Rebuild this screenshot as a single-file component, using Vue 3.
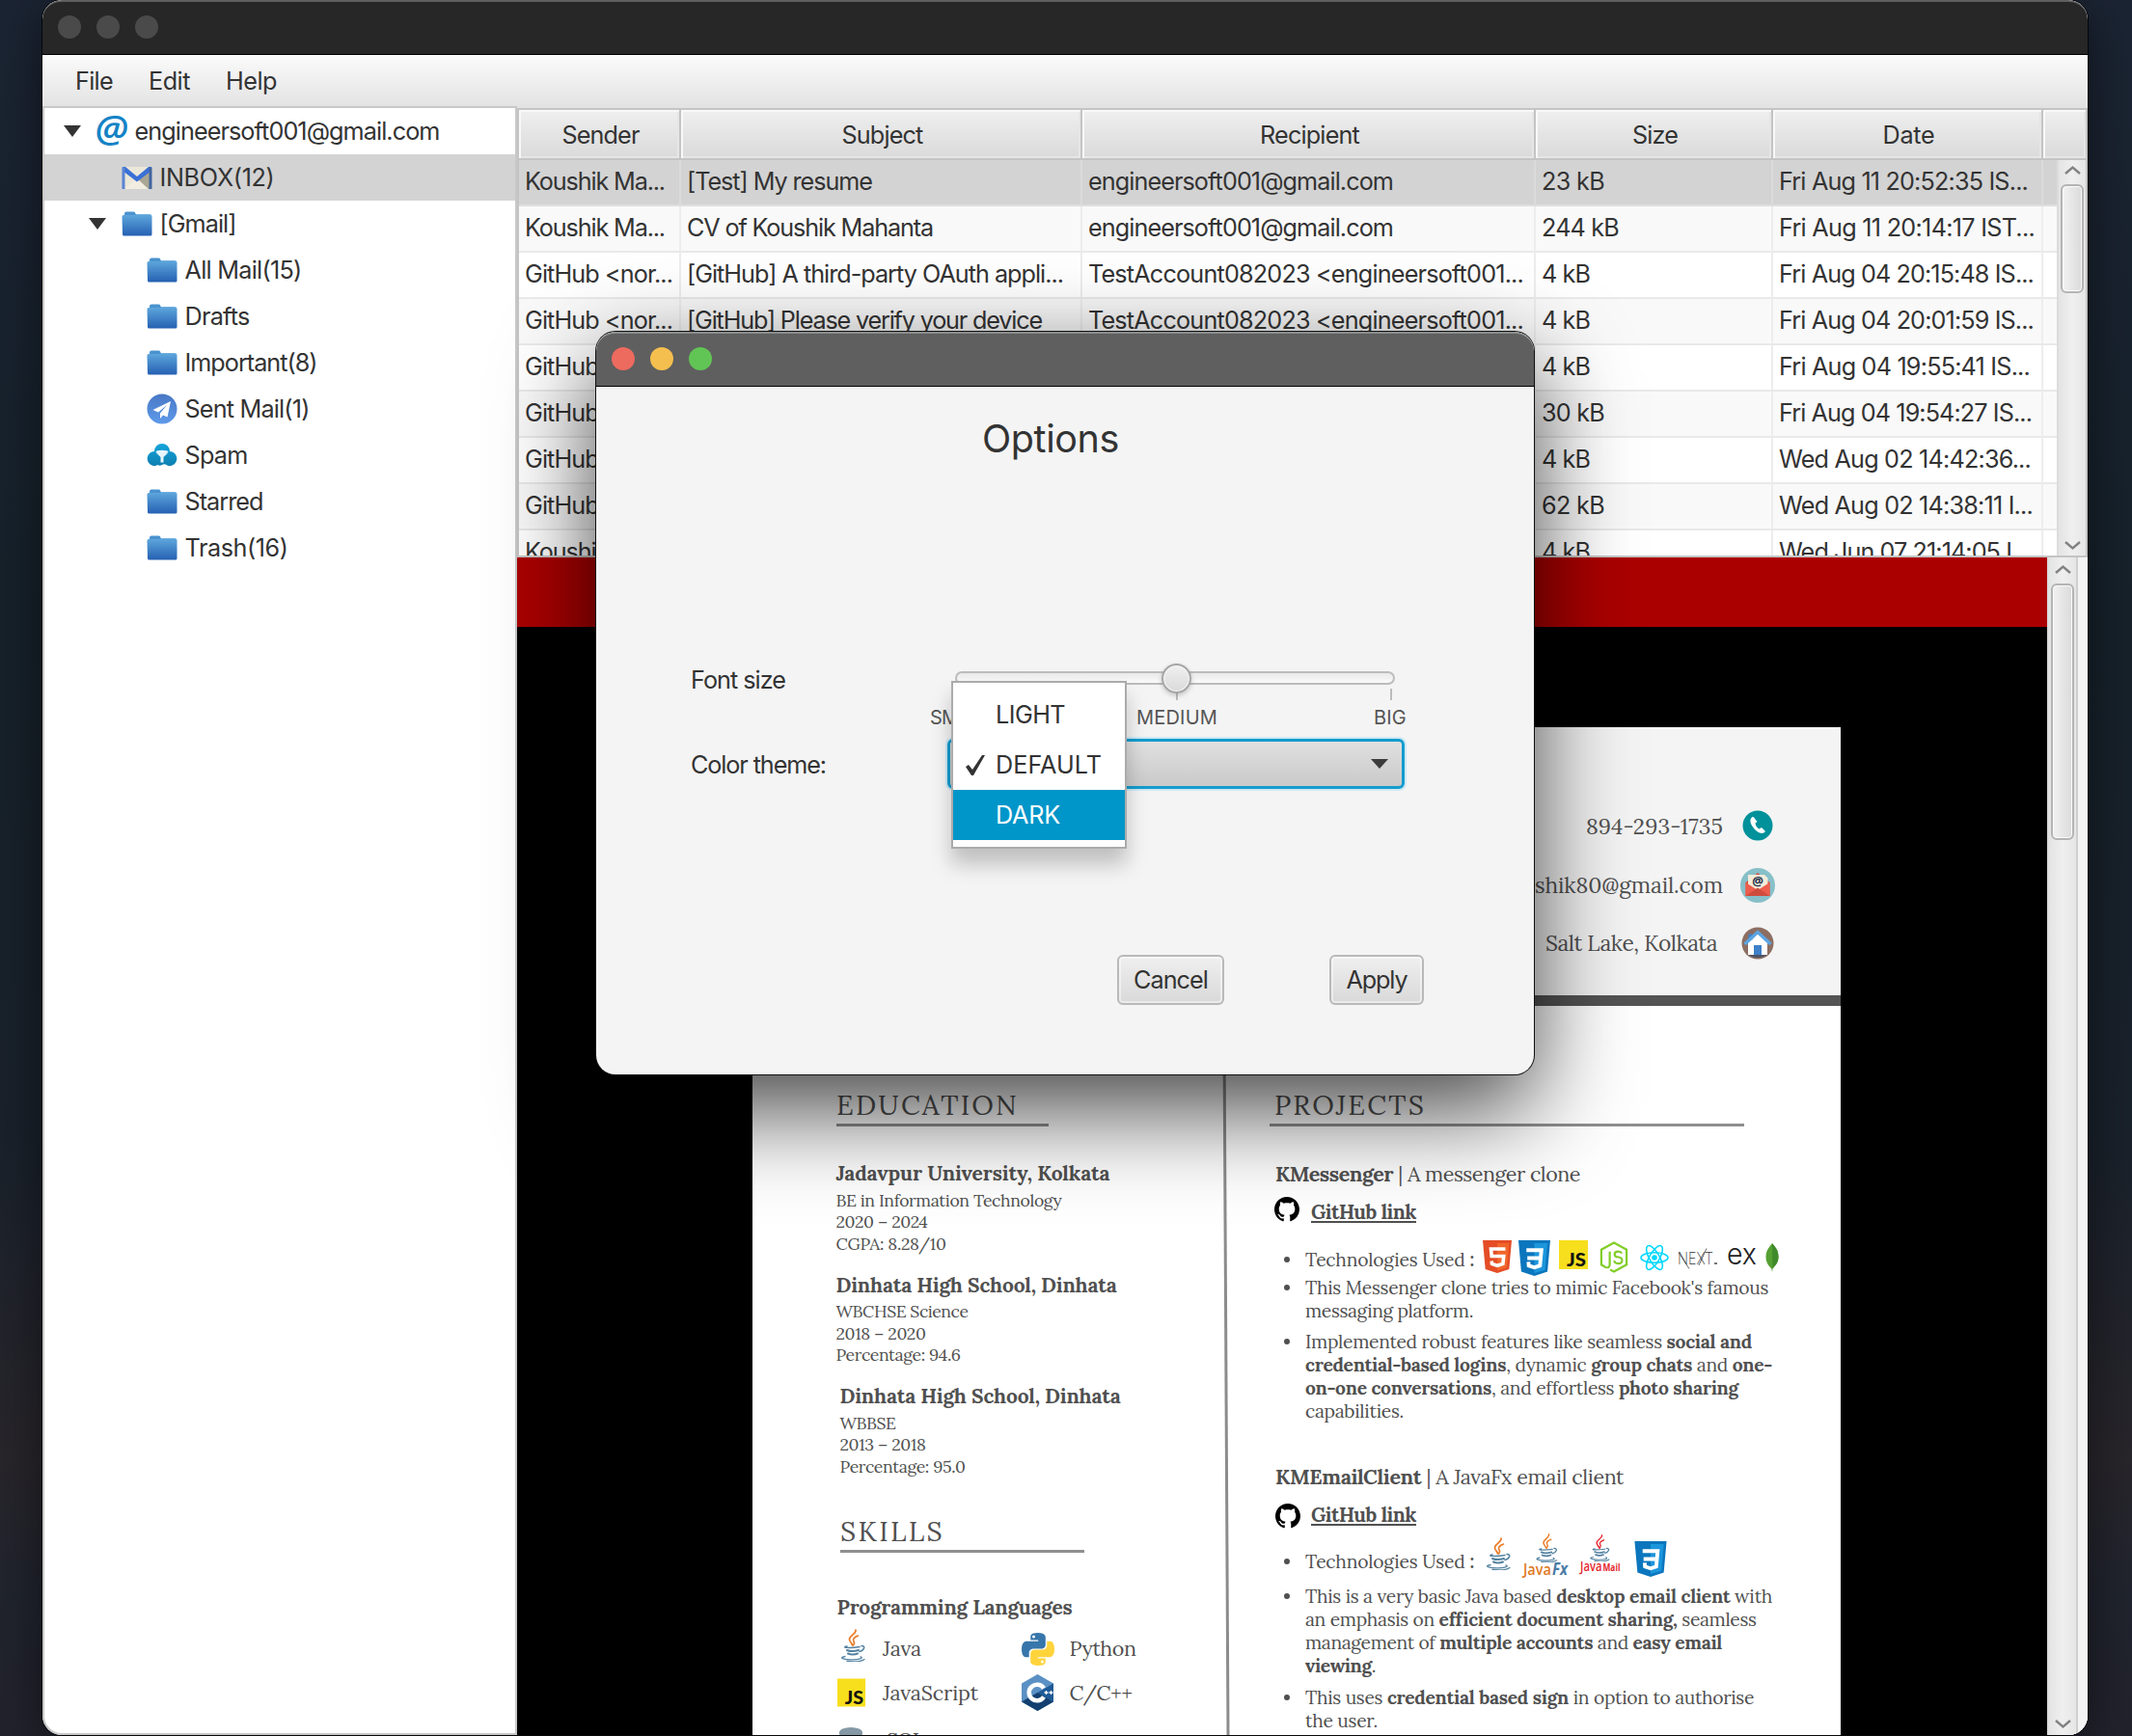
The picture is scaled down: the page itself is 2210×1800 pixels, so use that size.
<script setup>
const menus = [
  { t: 'File', w: 39 },
  { t: 'Edit', w: 43 },
  { t: 'Help', w: 53 },
]

const tree = [
  { t: 'engineersoft001@gmail.com', w: 316, level: 0, icon: 'at', open: true },
  { t: 'INBOX(12)', w: 119, level: 1, icon: 'inbox', selected: true },
  { t: '[Gmail]', w: 79, level: 1, icon: 'folder', open: true },
  { t: 'All Mail(15)', w: 121, level: 2, icon: 'folder' },
  { t: 'Drafts', w: 67, level: 2, icon: 'folder' },
  { t: 'Important(8)', w: 137, level: 2, icon: 'folder' },
  { t: 'Sent Mail(1)', w: 129, level: 2, icon: 'sent' },
  { t: 'Spam', w: 65, level: 2, icon: 'spam' },
  { t: 'Starred', w: 81, level: 2, icon: 'folder' },
  { t: 'Trash(16)', w: 107, level: 2, icon: 'folder' },
]

const columns = [
  { t: 'Sender', w: 80 },
  { t: 'Subject', w: 84 },
  { t: 'Recipient', w: 103 },
  { t: 'Size', w: 47 },
  { t: 'Date', w: 54 },
]

const me = ['Koushik Ma...', 145]
const gh = ['GitHub <nor...', 153]
const own = ['engineersoft001@gmail.com', 316]
const acc = ['TestAccount082023 <engineersoft001...', 451]
const gitSubject = ['[GitHub] Please verify your device', 368]
const mails = [
  [me, ['[Test] My resume', 192], own, ['23 kB', 65], ['Fri Aug 11 20:52:35 IS...', 258]],
  [me, ['CV of Koushik Mahanta', 255], own, ['244 kB', 80], ['Fri Aug 11 20:14:17 IST...', 265]],
  [gh, ['[GitHub] A third-party OAuth appli...', 390], acc, ['4 kB', 50], ['Fri Aug 04 20:15:48 IS...', 264]],
  [gh, gitSubject, acc, ['4 kB', 50], ['Fri Aug 04 20:01:59 IS...', 264]],
  [gh, gitSubject, acc, ['4 kB', 50], ['Fri Aug 04 19:55:41 IS...', 260]],
  [gh, gitSubject, acc, ['30 kB', 65], ['Fri Aug 04 19:54:27 IS...', 262]],
  [gh, gitSubject, acc, ['4 kB', 50], ['Wed Aug 02 14:42:36...', 261]],
  [gh, gitSubject, acc, ['62 kB', 65], ['Wed Aug 02 14:38:11 I...', 263]],
  [me, gitSubject, acc, ['4 kB', 50], ['Wed Jun 07 21:14:05 I...', 260]],
]

const schools = [
  { name: 'Jadavpur University, Kolkata', w: 284, lines: [['BE in Information Technology', 234], ['2020 – 2024', 95], ['CGPA: 8.28/10', 114]] },
  { name: 'Dinhata High School, Dinhata', w: 291, lines: [['WBCHSE Science', 137], ['2018 – 2020', 93], ['Percentage: 94.6', 129]] },
  { name: 'Dinhata High School, Dinhata', w: 291, shifted: true, lines: [['WBBSE', 58], ['2013 – 2018', 89], ['Percentage: 95.0', 130]] },
]

const chat = [
  [['This Messenger clone tries to mimic Facebook\'s famous', 480], ['messaging platform.', 174]],
  [
    ['Implemented robust features like seamless <b>social and</b>', 463],
    ['<b>credential-based logins</b>, dynamic <b>group chats</b> and <b>one-</b>', 484],
    ['<b>on-one conversations</b>, and effortless <b>photo sharing</b>', 449],
    ['capabilities.', 102],
  ],
]
const email = [
  [
    ['This is a very basic Java based <b>desktop email client</b> with', 484],
    ['an emphasis on <b>efficient document sharing,</b> seamless', 466],
    ['management of <b>multiple accounts</b> and <b>easy email</b>', 432],
    ['<b>viewing</b>.', 73],
  ],
  [['This uses <b>credential based sign</b> in option to authorise', 465], ['the user.', 75]],
]

// Tracks a run of text so that it fills the given advance width.
const vFit = {
  mounted(el, { value }) {
    el.style.letterSpacing = '0px'
    const natural = el.getBoundingClientRect().width
    el.style.letterSpacing = (value - natural) / el.textContent.length + 'px'
  },
}
</script>

<template>
  <div class="desktop">
    <svg width="0" height="0" class="defs">
      <defs>
        <linearGradient id="gFolder" x1="0" y1="0" x2="0" y2="1"><stop offset="0" stop-color="#5fa8dd" /><stop offset="1" stop-color="#2560b2" /></linearGradient>
        <linearGradient id="gSent" x1="0" y1="0" x2="0" y2="1"><stop offset="0" stop-color="#4878c4" /><stop offset="1" stop-color="#5f9aea" /></linearGradient>
        <linearGradient id="gSpam" x1="0" y1="0" x2="0" y2="1"><stop offset="0" stop-color="#12a5dc" /><stop offset="1" stop-color="#0e7fb0" /></linearGradient>
        <symbol id="at" viewBox="0 0 32 32">
          <text x="15.500" y="27" text-anchor="middle" font-family="Open Sans, sans-serif" font-weight="600" font-style="italic" font-size="37" textLength="34" lengthAdjust="spacingAndGlyphs" fill="#1583c6">@</text>
        </symbol>
        <symbol id="inbox" viewBox="0 0 32 32">
          <path d="M1 5h30v23H1z" fill="#ebe7d8" />
          <path d="M30 6v22h-4L16 18z" fill="#aaa693" />
          <path d="M3 28l13-11 12 11z" fill="#f1ede0" />
          <path d="M1 5h3l12 10L28 5h3v4L16 20.500 1 9z" fill="#3a70d6" />
          <path d="M.5 5.500h3V28h-3z" fill="#5a84d4" />
          <path d="M28.500 5.500h3V28h-3z" fill="#41659f" />
        </symbol>
        <symbol id="folder" viewBox="0 0 32 32">
          <path d="M3 5.500q0-2 2-2h7.500q1.700 0 2 2l.5 1h13.500q2 0 2 2v3H3z" fill="#4a93cf" />
          <path d="M.5 8.500q0-1.500 1.500-1.500h12l2-.7h13.500q2 0 2 2V27q0 1.500-1.500 1.500H2.500Q1 28.500 1 27z" fill="url(#gFolder)" />
        </symbol>
        <symbol id="sent" viewBox="0 0 32 32">
          <circle cx="16" cy="16" r="15.500" fill="url(#gSent)" />
          <path d="M25 8L6.500 17l5.500 2.400L21 12l-7 8.500V26l3-3.600 4.500 2z" fill="#fff" />
        </symbol>
        <symbol id="spam" viewBox="0 0 32 32">
          <path d="M8 12a8 8 0 0 1 16 0a7.500 7.500 0 0 1 2.500 14.500q-4 1.500-6-.5q-2-1.500-4.500 0t-4.500 0q-3 2-6 .5A7.500 7.500 0 0 1 8 12z" fill="url(#gSpam)" />
          <ellipse cx="16" cy="12.500" rx="6.500" ry="1.800" fill="#e6f5fb" />
          <path d="M9.800 13.500h12.400l-4.700 4.500v5.500h-3V18z" fill="#e6f5fb" />
        </symbol>
        <symbol id="github" viewBox="0 0 16 16">
          <path d="M8 0C3.580 0 0 3.580 0 8c0 3.540 2.290 6.530 5.470 7.590.4.070.55-.17.55-.38 0-.19-.010-.82-.010-1.490-2.010.37-2.530-.49-2.690-.94-.09-.23-.48-.94-.82-1.130-.28-.15-.68-.52-.010-.53.63-.010 1.080.58 1.230.82.72 1.210 1.870.87 2.330.66.070-.52.28-.87.51-1.070-1.780-.2-3.640-.89-3.640-3.950 0-.87.31-1.590.82-2.150-.08-.2-.36-1.020.08-2.120 0 0 .67-.21 2.200.82.64-.18 1.320-.27 2-.27s1.360.09 2 .27c1.530-1.040 2.200-.82 2.200-.82.44 1.100.16 1.920.08 2.120.51.56.82 1.270.82 2.150 0 3.070-1.870 3.750-3.650 3.950.29.25.54.73.54 1.480 0 1.070-.010 1.930-.010 2.200 0 .21.15.46.55.38A8.010 8.010 0 0 0 16 8c0-4.420-3.580-8-8-8z" fill="#000" />
        </symbol>
        <symbol id="html5" viewBox="0 0 30 34">
          <path d="M0 0h30l-2.700 30L15 34 2.700 30z" fill="#e44d26" />
          <path d="M15 3h12.300L25 28.500 15 31.500z" fill="#f16529" />
          <path d="M23.500 9H8.500l.7 7.500h12.500l-.8 8-5.900 1.800L9.500 24.500l-.3-3" fill="none" stroke="#fff" stroke-width="3.600" />
        </symbol>
        <symbol id="css3" viewBox="0 0 34 38">
          <path d="M0 0h34l-3 33.500L17 38 3 33.500z" fill="#0b76bd" />
          <path d="M17 3h14l-2.600 28.500L17 35z" fill="#1c96dc" />
          <path d="M8.500 10.500h16l-1.500 16.500-6 2-6-2-.3-4M9.500 19h14" fill="none" stroke="#fff" stroke-width="4" />
        </symbol>
        <symbol id="js" viewBox="0 0 30 30">
          <path d="M0 0h30v30H0z" fill="#f7df1e" />
          <text x="8" y="27" font-family="Lato, sans-serif" font-weight="900" font-size="19.500" textLength="20" lengthAdjust="spacingAndGlyphs" fill="#111">JS</text>
        </symbol>
        <symbol id="node" viewBox="0 0 30 34">
          <path d="M11 30.500l4 2L28.500 25V9L15 1.500 1.500 9v16l4.500 2.800q4.500 1.200 4.500-3V11" fill="none" stroke="#83cd29" stroke-width="2.300" />
          <path d="M23.500 13q-1-2-4-2-3.800 0-3.800 2.800t4 3.200 4 3.500-4 3.300-4.500-3" fill="none" stroke="#83cd29" stroke-width="2.200" />
        </symbol>
        <symbol id="react" viewBox="0 0 30 28">
          <g fill="none" stroke="#00d8ff" stroke-width="1.600">
            <ellipse cx="15" cy="14" rx="14" ry="5.200" />
            <ellipse cx="15" cy="14" rx="14" ry="5.200" transform="rotate(60 15 14)" />
            <ellipse cx="15" cy="14" rx="14" ry="5.200" transform="rotate(120 15 14)" />
          </g>
          <circle cx="15" cy="14" r="2.800" fill="#00d8ff" />
        </symbol>
        <symbol id="leaf" viewBox="0 0 14 30">
          <path d="M7 0c2 3 6.500 6 6.500 14 0 7-4 9.500-6 12.500L7 30l-.7-3.500C4 24 .5 21 .5 14 .5 7 5 3 7 0z" fill="#56a033" />
          <path d="M7 0c2 3 6.500 6 6.500 14 0 7-4 9.500-6 12.500z" fill="#3f8b2b" />
        </symbol>
        <symbol id="java" viewBox="0 0 26 34">
          <g fill="none" stroke-linecap="round">
            <path d="M16 1c1 4-7 6-6.500 10 .2 2.500 2.800 3.500 3 6" stroke-width="1.700" />
            <path d="M18.500 7c-4 1.500-6 3.500-4.500 6 1 1.500.5 2.800-.5 4" stroke-width="1.600" />
          </g>
          <g fill="none" stroke="#5382a1" stroke-linecap="round">
            <path d="M7 18c-7 1.500 4 2 13 .5M22 17.500c5 0 2.500 5-2 6" stroke-width="1.500" />
            <path d="M7 22c3 1.300 8 1.300 12 0M8 25.500c3 1.300 6.500 1.300 10 0" stroke-width="2" />
            <path d="M5 28.500C-3 30 5 32 13 31.800c6 0 12-1.500 8-3M7 33.500c7 .8 15 0 18-2" stroke-width="1.300" />
          </g>
        </symbol>
        <symbol id="python" viewBox="0 0 34 34">
          <path d="M16.800 0C9 0 9.300 3.500 9.300 3.500V7.500h7.900v1.200H5.500S0 8 0 17s4.700 8.300 4.700 8.300h3v-4s-.2-4.700 4.700-4.700h7.900s4.500 0 4.500-4.400V4.800S25.500 0 16.800 0zM12.500 2.500a1.500 1.500 0 1 1 0 3 1.500 1.500 0 0 1 0-3z" fill="#3776ab" />
          <path transform="rotate(180 17 17)" d="M16.800 0C9 0 9.300 3.500 9.300 3.500V7.500h7.900v1.200H5.500S0 8 0 17s4.700 8.300 4.700 8.300h3v-4s-.2-4.700 4.700-4.700h7.900s4.500 0 4.500-4.400V4.800S25.500 0 16.800 0zM12.500 2.500a1.500 1.500 0 1 1 0 3 1.500 1.500 0 0 1 0-3z" fill="#ffd43b" />
        </symbol>
        <symbol id="cpp" viewBox="0 0 33 38">
          <path d="M16.500 0L33 9.500v19L16.500 38 0 28.500v-19z" fill="#5b90c4" />
          <path d="M33 9.500v19L16.500 19z" fill="#1f5a96" />
          <path d="M0 28.500L16.500 19 33 28.500 16.500 38z" fill="#123f70" />
          <path d="M23 14.500a8.300 8.300 0 1 0 0 9" fill="none" stroke="#fff" stroke-width="4.600" />
          <path d="M23.500 19h4M25.500 17v4M28.500 19h4M30.500 17v4" stroke="#fff" stroke-width="1.400" />
        </symbol>
        <symbol id="database" viewBox="0 0 24 34">
          <path d="M0 5v25h24V5z" fill="#a3b4bf" />
          <ellipse cx="12" cy="5.500" rx="12" ry="5.500" fill="#8499a5" />
          <path d="M12 11h12v20H12z" fill="#93a6b1" />
        </symbol>
      </defs>
    </svg>

    <div class="app">
      <div class="titlebar"><i /><i /><i /></div>
      <div class="menubar">
        <div v-for="m in menus" :key="m.t" class="menu"><span v-fit="m.w">{{ m.t }}</span></div>
      </div>
      <div class="body">
        <div class="tree">
          <div v-for="n in tree" :key="n.t" class="node" :class="['l' + n.level, { selected: n.selected }]">
            <svg class="twisty" viewBox="0 0 18 12"><path v-if="n.open" d="M0 0h18l-9 12z" fill="#333" /></svg>
            <svg class="nodeicon"><use :href="'#' + n.icon" /></svg>
            <span v-fit="n.w">{{ n.t }}</span>
          </div>
        </div>

        <div class="main">
          <div class="table">
            <div class="thead">
              <div v-for="c in columns" :key="c.t" class="th"><span v-fit="c.w">{{ c.t }}</span></div>
              <div class="th" />
            </div>
            <div class="tbody">
              <div class="rows">
                <div v-for="(m, i) in mails" :key="i" class="tr" :class="{ selected: i === 0 }">
                  <div v-for="(c, j) in m" :key="j" class="td"><span v-fit="c[1]">{{ c[0] }}</span></div>
                  <div class="td" />
                </div>
              </div>
              <div class="scroll">
                <svg class="chev" viewBox="0 0 17 9"><path d="M1 8l7.500-6.500L16 8" /></svg>
                <div class="thumb" />
                <svg class="chev down" viewBox="0 0 17 9"><path d="M1 1l7.500 6.500L16 1" /></svg>
              </div>
            </div>
          </div>

          <div class="web">
            <div class="view">
              <div class="red" />
              <div class="page">
                <div class="contact">
                  <div class="crow"><span v-fit="142">894-293-1735</span><svg viewBox="0 0 36 36"><circle cx="18" cy="18" r="15.500" fill="#00919a" /><path d="M12 9.500c-4 3 0 10 4 13.500 4 3.500 8 4 10 1l-4-4-2.500 1.500c-2-1-4-4-4-6L17.500 14 14 9.500c-.7-.6-1.400-.5-2 0z" fill="#fff" /></svg></div>
                  <div class="crow"><span v-fit="195">shik80@gmail.com</span><svg viewBox="0 0 36 36"><circle cx="18" cy="18" r="18" fill="#87c0c9" /><path d="M5.500 15L18 5l12.500 10v14h-25z" fill="#d9503f" /><path d="M8 7h17l3.500 3.500V20L18 25 8 20z" fill="#f3ebd9" /><path d="M5.500 15L18 23l12.500-8v14h-25z" fill="#ee5e4c" /><path d="M5.500 29L18 20.500 30.500 29z" fill="#cf4d3e" /><text x="18" y="18" text-anchor="middle" font-family="Open Sans, sans-serif" font-weight="700" font-size="13" fill="#22304a">@</text></svg></div>
                  <div class="crow last"><span v-fit="178">Salt Lake, Kolkata</span><svg viewBox="0 0 36 36"><circle cx="18" cy="18" r="16.500" fill="#8c6e62" /><path d="M8 29.500h20a16 16 0 0 1-20 0z" fill="#4b5468" /><path d="M8 17L18 7l10 10v13H8z" fill="#fff" /><path d="M8.500 8.500h4v6h-4z" fill="#3e80c8" /><path d="M4.500 19L18 6.500 31.500 19" fill="none" stroke="#5aa5e4" stroke-width="3.400" /><path d="M14 20h8v10h-8z" fill="#3e80c8" /></svg></div>
                </div>
                <div class="cols">
                  <div class="left">
                    <h2 class="edu"><span v-fit="189">EDUCATION</span></h2>
                    <div class="schools">
                      <div v-for="(s, i) in schools" :key="i" class="school" :class="{ shifted: s.shifted }">
                        <h3><span v-fit="s.w">{{ s.name }}</span></h3>
                        <p v-for="l in s.lines" :key="l[0]"><span v-fit="l[1]">{{ l[0] }}</span></p>
                      </div>
                    </div>
                    <h2 class="skl"><span v-fit="108">SKILLS</span></h2>
                    <h3 class="langs"><span v-fit="244">Programming Languages</span></h3>
                    <div class="skills">
                      <div class="skill"><svg class="orange" width="26" height="34"><use href="#java" /></svg><span v-fit="40">Java</span></div>
                      <div class="skill"><svg width="34" height="34"><use href="#python" /></svg><span v-fit="69">Python</span></div>
                      <div class="skill"><svg width="29" height="30"><use href="#js" /></svg><span v-fit="99">JavaScript</span></div>
                      <div class="skill"><svg width="33" height="38"><use href="#cpp" /></svg><span v-fit="65">C/C++</span></div>
                      <div class="skill sql"><svg width="24" height="34"><use href="#database" /></svg><span v-fit="38">SQL</span></div>
                    </div>
                  </div>
                  <svg class="rule" viewBox="0 0 8 756"><path d="M1.800 0L6 756" stroke="#8c8c8c" stroke-width="3" /></svg>
                  <div class="right">
                    <h2 class="prj"><span v-fit="157">PROJECTS</span></h2>
                    <h4><span v-fit="316"><b>KMessenger</b> | A messenger clone</span></h4>
                    <div class="gh"><svg><use href="#github" /></svg><span v-fit="109">GitHub link</span></div>
                    <div class="tech">
                      <span class="dot" /><span v-fit="175" class="tt">Technologies Used <b>:</b></span>
                      <svg class="i-html" width="30" height="34"><use href="#html5" /></svg>
                      <svg class="i-css" width="33" height="37"><use href="#css3" /></svg>
                      <svg class="i-js" width="30" height="30"><use href="#js" /></svg>
                      <svg class="i-node" width="30" height="33"><use href="#node" /></svg>
                      <svg class="i-react" width="30" height="28"><use href="#react" /></svg>
                      <svg class="i-next" width="42" height="24" viewBox="0 0 42 24"><path d="M1 5.500l11 17M22 19L30 1.500" stroke="#555" stroke-width=".9" /><text x="0" y="18" font-family="Inter, sans-serif" font-weight="200" font-size="17" textLength="37" lengthAdjust="spacingAndGlyphs" fill="#333">NEXT</text><path d="M38 16h3v2h-3z" fill="#777" /></svg>
                      <svg class="i-ex" width="31" height="24" viewBox="0 0 31 24"><text x="0" y="19" font-family="Inter, sans-serif" font-weight="300" font-size="30" textLength="31" lengthAdjust="spacingAndGlyphs" fill="#222">ex</text></svg>
                      <svg class="i-leaf" width="14" height="30"><use href="#leaf" /></svg>
                    </div>
                    <div v-for="(item, i) in chat" :key="i" class="item" :class="'c' + i">
                      <span class="dot" />
                      <div><p v-for="l in item" :key="l[0]"><span v-fit="l[1]" v-html="l[0]" /></p></div>
                    </div>
                    <h4 class="second"><span v-fit="361"><b>KMEmailClient</b> | A JavaFx email client</span></h4>
                    <div class="gh g2"><svg><use href="#github" /></svg><span v-fit="109">GitHub link</span></div>
                    <div class="tech t2">
                      <span class="dot" /><span v-fit="175" class="tt">Technologies Used <b>:</b></span>
                      <svg class="i-java" width="26" height="34"><use class="orange" href="#java" /></svg>
                      <svg class="i-fx" width="48" height="48" viewBox="0 0 48 48"><svg class="orange" x="13" y="0" width="24" height="30"><use href="#java" /></svg><text x="1" y="43" font-family="Open Sans, sans-serif" font-weight="600" font-size="17" textLength="29" lengthAdjust="spacingAndGlyphs" fill="#e07a1f">Java</text><text x="31" y="43" font-family="Open Sans, sans-serif" font-weight="700" font-style="italic" font-size="17" textLength="16" lengthAdjust="spacingAndGlyphs" fill="#4a7ba6">Fx</text></svg>
                      <svg class="i-mail" width="42" height="42" viewBox="0 0 42 42"><svg class="crimson" x="8" y="0" width="24" height="28"><use href="#java" /></svg><text x="0" y="38" font-family="Open Sans, sans-serif" font-weight="600" font-size="14.500" textLength="22.500" lengthAdjust="spacingAndGlyphs" fill="#e5242c">Java</text><text x="23.500" y="38" font-family="Open Sans, sans-serif" font-weight="700" font-size="11" textLength="18" lengthAdjust="spacingAndGlyphs" fill="#e5242c">Mail</text></svg>
                      <svg class="i-css2" width="34" height="37"><use href="#css3" /></svg>
                    </div>
                    <div v-for="(item, i) in email" :key="i" class="item" :class="'e' + i">
                      <span class="dot" />
                      <div><p v-for="l in item" :key="l[0]"><span v-fit="l[1]" v-html="l[0]" /></p></div>
                    </div>
                  </div>
                </div>
              </div>
            </div>
            <div class="scroll wide">
              <svg class="chev" viewBox="0 0 17 9"><path d="M1 8l7.500-6.500L16 8" /></svg>
              <div class="thumb" />
              <svg class="chev down" viewBox="0 0 17 9"><path d="M1 1l7.500 6.500L16 1" /></svg>
            </div>
          </div>
        </div>
      </div>
    </div>

    <div class="dialog">
      <div class="dtitle"><i class="r" /><i class="y" /><i class="g" /></div>
      <div class="dbody">
        <h1><span v-fit="142">Options</span></h1>
        <div class="frow size">
          <label><span v-fit="98">Font size</span></label>
          <div class="slider">
            <div class="track"><div class="knob" /></div>
            <div class="ticks"><i /><i /><i /></div>
            <div class="marks"><div><span v-fit="63">SMALL</span></div><div><span v-fit="84">MEDIUM</span></div><div><span v-fit="34">BIG</span></div></div>
          </div>
        </div>
        <div class="frow theme">
          <label><span v-fit="140">Color theme:</span></label>
          <div class="combo"><svg viewBox="0 0 18 10"><path d="M0 0h18l-9 10z" fill="#3c3c3c" /></svg></div>
        </div>
        <div class="buttons">
          <button class="cancel"><span v-fit="77">Cancel</span></button>
          <button class="apply"><span v-fit="63">Apply</span></button>
        </div>
      </div>
      <div class="popup">
        <div class="opt"><span v-fit="72">LIGHT</span></div>
        <div class="opt"><svg viewBox="0 0 20 21"><path d="M0 12l3-2 4 5L17 0h3L8 21H6z" fill="#333" /></svg><span v-fit="110">DEFAULT</span></div>
        <div class="opt hot"><span v-fit="67">DARK</span></div>
      </div>
    </div>
  </div>
</template>

<style>
body { margin: 0; overflow: hidden; }
</style>

<style scoped>
.desktop {
  position: relative;
  width: 2210px;
  height: 1800px;
  overflow: hidden;
  background: linear-gradient(180deg, #1b2433 0, #16212a 35%, #19212b 65%, #28252b 84%, #20242e 92%, #22222c 100%);
  font-family: Inter, "Liberation Sans", sans-serif;
  font-size: 25.2px;
  color: #333;
  white-space: nowrap;
}
.defs { position: absolute; }
span { display: inline-block; }
svg { display: block; flex: none; overflow: visible; }
h1, h2, h3, h4, p { margin: 0; font-weight: 400; }

.app {
  position: absolute;
  left: 44px;
  top: 0;
  width: 2120px;
  height: 1799px;
  border-radius: 20px;
  overflow: hidden;
  display: flex;
  flex-direction: column;
  background: #f4f4f4;
  box-shadow: 0 0 0 1px #05070a, 0 10px 50px rgba(0, 0, 0, .5);
}
.titlebar {
  height: 57px;
  box-sizing: border-box;
  padding: 0 0 2px 16px;
  display: flex;
  align-items: center;
  gap: 16px;
  background: #272727;
  border-top: 2px solid #5d5f60;
  border-bottom: 1px solid #000;
  border-radius: 20px 20px 0 0;
}
.titlebar i { width: 24px; height: 24px; border-radius: 50%; background: #4a4a4a; }
.menubar {
  height: 53px;
  box-sizing: border-box;
  padding: 1px 0 0 34px;
  line-height: 53px;
  display: flex;
  gap: 37px;
  background: linear-gradient(#fbfbfb, #e3e3e3);
}
.body { flex: 1; display: flex; min-height: 0; }
.tree { width: 488px; border: 2px solid #c8c8c8; background: #fff; border-radius: 0 0 0 20px; }
.node { height: 48px; line-height: 48px; display: flex; align-items: center; padding-left: 20px; }
.node.l1 { padding-left: 46px; }
.node.l2 { padding-left: 72px; }
.node.selected { background: #d3d3d3; }
.twisty { width: 18px; height: 12px; margin-right: 15.500px; }
.nodeicon { width: 32px; height: 32px; margin-right: 8px; }

.main { flex: 1; display: flex; flex-direction: column; min-width: 0; padding-top: 2px; background: #e3e3e3; }
.table { height: 466px; box-sizing: border-box; border: 2px solid #c4c4c4; background: #fff; display: flex; flex-direction: column; }
.thead, .tr { display: grid; grid-template-columns: 168px 416px 470px 246px 280px 1fr; }
.thead { height: 52px; }
.th {
  box-sizing: border-box;
  line-height: 52px;
  padding-left: 3px;
  text-align: center;
  height: 52px;
  border-right: 2px solid #c4c4c4;
  border-bottom: 2px solid #c4c4c4;
  background: linear-gradient(#efefef, #dadada);
  box-shadow: inset 2px 2px 0 #f8f8f8, inset -2px -2px 0 #e6e6e6;
}
.th:last-child { border-right: 0; }
.tbody { flex: 1; display: flex; min-height: 0; }
.rows { flex: 1; overflow: hidden; }
.tr { height: 48px; line-height: 44px; background: #fff; }
.tr:nth-child(even) { background: #f9f9f9; }
.td { box-sizing: border-box; overflow: hidden; padding-left: 6px; border-right: 2px solid #ededed; border-bottom: 2px solid #e9e9e9; }
.td:last-child { border-right: 0; }
.tr.selected { background: #d3d3d3; }
.tr.selected .td { border-color: #dbdbdb; border-bottom-color: #dedede; }
.scroll {
  width: 30px;
  box-sizing: border-box;
  display: flex;
  flex-direction: column;
  align-items: center;
  padding: 6px 0 6px;
  border-left: 2px solid #dcdcdc;
  background: linear-gradient(90deg, #e4e4e4, #efefef 50%, #e6e6e6);
}
.chev { width: 17px; height: 9px; }
.chev path { fill: none; stroke: #828282; stroke-width: 2.4; }
.chev.down { margin-top: auto; }
.thumb {
  box-sizing: border-box;
  width: 24px;
  height: 113px;
  margin-top: 10px;
  border: 2px solid #b4b4b4;
  border-radius: 6px;
  background: linear-gradient(90deg, #f2f2f2, #dadada);
  box-shadow: inset 0 0 0 1px #fafafa;
}
.web { flex: 1; min-height: 0; display: flex; background: #f4f4f4; }
.scroll.wide { width: 32px; padding: 8px 0 7px; border-right: 2px solid #cfcfcf; }
.scroll.wide .thumb { height: 266px; }
.view { width: 1588px; box-sizing: border-box; margin-left: -2px; border-left: 2px solid #c8c8c8; background: #000; overflow: hidden; }
.red { height: 72px; background: #ab0000; }

.page {
  width: 1128px;
  height: 1046px;
  margin: 104px 0 0 244px;
  background: #fff;
  color: #505050;
  font-family: Lora, "Liberation Serif", serif;
}
.contact {
  height: 289px;
  box-sizing: border-box;
  padding: 73px 68px 0 0;
  border-bottom: 11px solid #545454;
  background: #f4f4f4;
  font-size: 22.800px;
  display: flex;
  flex-direction: column;
  align-items: flex-end;
}
.crow { display: flex; align-items: center; gap: 18px; height: 61px; line-height: 61px; }
.crow svg { width: 36px; height: 36px; }
.crow span { margin-top: -3px; }
.crow:first-child svg { margin-top: -4px; }
.crow:nth-child(2) svg { margin-top: -1px; }
.crow.last { gap: 24px; }
.crow.last span { margin-top: -5px; }
.crow.last svg { margin-top: -3px; }
.cols { display: flex; height: 756px; }
.left { width: 400px; padding: 83px 0 0 87px; flex: none; }
h2 { font-size: 28.500px; line-height: 40px; height: 39px; border-bottom: 3px solid #8f8f8f; }
h2.edu { width: 220px; }
h2.skl { width: 253px; margin: 35.500px 0 0 4px; }
h2.prj { padding-left: 5px; }
h3 { font-size: 21px; line-height: 30px; font-weight: 700; }
.schools { padding-top: 34px; display: flex; flex-direction: column; gap: 16.500px; }
.school.shifted { padding-left: 4px; }
.school p { font-size: 17.600px; line-height: 22.500px; height: 22.500px; }
.school h3 { margin-bottom: 1.500px; }
.school h3, .school p { margin-left: -.5px; }
.langs { margin-top: 42px; padding-left: .5px; }
.skills { display: grid; grid-template-columns: 191px 1fr; grid-auto-rows: 45.500px; padding-top: 5.500px; font-size: 21.500px; line-height: 45px; }
.skill { display: grid; align-items: center; justify-content: start; grid-template-columns: 48px auto; height: 45px; }
.skill:nth-child(even) { grid-template-columns: 50.500px auto; }
.skill:nth-child(even) svg { margin-left: .5px; }
.skill:nth-child(1) svg { margin: -7px 0 0 4px; }
.skill:nth-child(3) svg { margin-left: 1px; }
.skill.sql svg { margin: 10px 0 0 3px; }
.skill.sql span { margin: 4px 0 0 4px; }
.orange { stroke: #ea7a24; }
.crimson { stroke: #e5242c; }
.rule { width: 8px; height: 756px; }
.right { width: 492px; padding: 83px 0 0 41px; flex: none; }
h4 { font-size: 21.500px; line-height: 30px; margin-top: 33.500px; padding-left: 6px; }
.gh { display: flex; align-items: center; gap: 11px; height: 30px; line-height: 30px; margin-top: 10.500px; padding-left: 6px; font-size: 20.500px; font-weight: 700; }
.gh svg { width: 26px; height: 26px; margin: -6px 0 0 -1px; }
.gh span { margin-left: 1px; text-decoration: underline; text-underline-offset: 2px; text-decoration-thickness: 2px; }
.gh.g2 svg { margin: 1px 0 0 0; }
.gh.g2 span { margin-left: 0; }
.tech { display: flex; align-items: center; height: 24px; line-height: 24px; margin-top: 21.500px; padding-left: 15px; font-size: 19.300px; }
.dot { width: 6px; height: 6px; border-radius: 50%; background: #505050; margin: 0 16px 0 0; flex: none; }
.i-html { margin: -6px 7px 0 9px; }
.i-css { margin: -3px 9px 0 0; }
.i-js { margin: -10px 12px 0 0; }
.i-node { margin: -4px 12px 0 0; }
.i-react { margin: -3px 9px 0 0; }
.i-next { margin: -2px 9px 0 0; }
.i-ex { margin: -4px 9px 0 0; }
.i-leaf { margin: -3px 0 0 0; }
.item { display: flex; margin-top: 5.500px; padding-left: 15px; font-size: 19.300px; line-height: 24.200px; }
.item .dot { margin-top: 9px; }
.item p { height: 24.200px; }
.item.c1 { margin-top: 7.500px; }
h4.second { margin-top: 40px; }
.tech.t2 { margin-top: 21px; }
.i-java { margin: -17px 12px 0 12px; }
.i-fx { margin: -11px 12px 0 0; }
.i-mail { margin: -14px 14px 0 0; }
.i-css2 { margin: -5px 0 0 0; }
.item.e0 { margin-top: 11.500px; }
.item.e1 { margin-top: 8.500px; }

.dialog {
  position: absolute;
  left: 618px;
  top: 344px;
  width: 972px;
  height: 770px;
  border-radius: 20px;
  background: #f4f4f4;
  box-shadow: 0 0 0 1px #111, 0 36px 100px rgba(0, 0, 0, .74);
}
.dtitle {
  height: 57px;
  box-sizing: border-box;
  display: flex;
  align-items: center;
  gap: 16px;
  padding: 0 0 2px 16px;
  background: #5f5f5f;
  border-top: 2px solid #8a8c8c;
  border-bottom: 1px solid #000;
  border-radius: 20px 20px 0 0;
}
.dtitle i { width: 24px; height: 24px; border-radius: 50%; }
.dtitle .r { background: #ed6a5f; }
.dtitle .y { background: #f5bf4f; }
.dtitle .g { background: #61c555; }
.dbody { padding-top: 24px; }
h1 { font-size: 39.500px; line-height: 60px; text-align: center; padding-right: 30px; }
.frow { display: flex; padding-left: 98px; line-height: 54px; }
.frow label { width: 266px; }
.frow.size { margin-top: 200px; height: 81px; line-height: 40px; }
.frow.theme { height: 52px; }
.slider { width: 456px; padding: 11px 0 0 8px; }
.track {
  position: relative;
  box-sizing: border-box;
  width: 456px;
  height: 14px;
  border: 2px solid #bcbcbc;
  border-radius: 7px;
  background: linear-gradient(#e9e9e9, #fafafa);
}
.knob {
  position: absolute;
  left: 212px;
  top: -10px;
  box-sizing: border-box;
  width: 31px;
  height: 31px;
  border: 2px solid #a6a6a6;
  border-radius: 50%;
  background: linear-gradient(#f0f0f0, #dadada);
  box-shadow: inset 0 0 0 1px #f6f6f6, 0 2px 5px rgba(0, 0, 0, .2);
}
.ticks { display: flex; justify-content: space-between; margin-top: 4px; padding: 0 3px 0 7px; }
.ticks i { width: 2px; height: 12px; background: #bcbcbc; }
.marks { display: grid; grid-template-columns: 214px 246px auto; margin: 6px -10px 0 -26px; font-size: 20px; line-height: 24px; color: #555; }
.combo {
  box-sizing: border-box;
  width: 474px;
  height: 52px;
  display: flex;
  align-items: center;
  justify-content: flex-end;
  padding-right: 14px;
  border: 3px solid #149cce;
  border-radius: 6px;
  background: linear-gradient(#e0e0e0, #c9c9c9);
  box-shadow: 0 0 0 2px #cfeaf5;
}
.combo svg { width: 18px; height: 10px; }
.buttons { display: flex; gap: 109px; margin: 172px 0 0 540px; }
button {
  box-sizing: border-box;
  height: 52px;
  padding: 1px 0 0;
  font: inherit;
  color: #333;
  line-height: 47px;
  border: 2px solid #b9b9b9;
  border-radius: 6px;
  background: linear-gradient(#efefef, #d9d9d9);
  box-shadow: inset 0 0 0 2px rgba(255, 255, 255, .45);
}
.cancel { width: 111px; }
.apply { width: 98px; }
.popup {
  position: absolute;
  left: 368px;
  top: 362px;
  box-sizing: border-box;
  width: 182px;
  height: 174px;
  padding-top: 7px;
  border: 2px solid #ababab;
  background: #fff;
  box-shadow: 0 16px 20px rgba(0, 0, 0, .22);
}
.opt { position: relative; height: 52px; line-height: 53px; padding-left: 44px; }
.opt svg { position: absolute; left: 13px; top: 16px; width: 20px; height: 21px; }
.opt.hot { background: #0096c9; color: #fff; }
</style>
